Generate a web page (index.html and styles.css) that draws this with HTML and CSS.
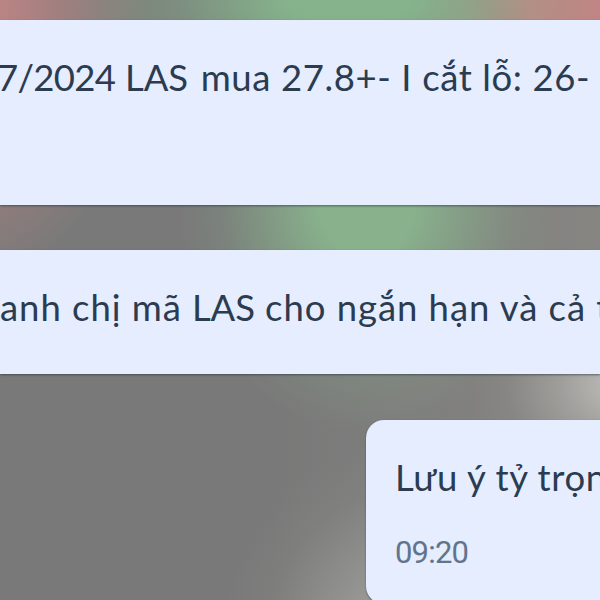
FILE: index.html
```
<!DOCTYPE html>
<html lang="vi">
  <head>
    <meta charset="UTF-8" />
    <title>Chat</title>
    <link rel="stylesheet" href="styles.css">
  </head>
  <body>
    <main class="chat">
      <div class="bubble bubble-first">
        <p class="text line-a"><span class="date">7/2024</span> <span class="code">LAS</span> mua 27.8+- I cắt lỗ: 26-</p>
      </div>
      <div class="bubble bubble-second">
        <p class="text line-b">anh chị mã <span class="code">LAS</span> cho ngắn hạn và cả t</p>
      </div>
      <div class="bubble bubble-last">
        <p class="text line-c">Lưu ý tỷ trọn</p>
        <time class="time">09:20</time>
      </div>
    </main>
  </body>
</html>
```

FILE: styles.css
```
* {
  box-sizing: border-box;
}
body {
  margin: 0;
  overflow: hidden;
}
.chat {
  display: flex;
  flex-direction: column;
  width: 600px;
  height: 600px;
  padding-top: 20px;
  overflow: hidden;
  font-family: Lato, "Noto Sans", sans-serif;
  color: #2b3b50;
  background:
    radial-gradient(ellipse 150px 120px at 620px 385px, #bfbebb 0%, rgba(176, 175, 172, 0.6) 40%, rgba(160, 159, 156, 0.15) 75%, rgba(150, 150, 148, 0) 100%),
    radial-gradient(ellipse 190px 200px at 410px 640px, #aaa9a6 0%, rgba(160, 160, 157, 0.6) 40%, rgba(145, 145, 141, 0.2) 75%, rgba(140, 140, 137, 0) 100%),
    radial-gradient(ellipse 190px 240px at 367px 195px, #88b18c 0%, #88b18c 26%, rgba(136, 177, 140, 0.6) 50%, rgba(136, 177, 140, 0.17) 77%, rgba(136, 177, 140, 0) 100%),
    radial-gradient(ellipse 340px 130px at 350px 0, #85b38b 0%, #85b38b 18%, rgba(133, 179, 139, 0.35) 52%, rgba(133, 179, 139, 0) 85%),
    radial-gradient(ellipse 190px 290px at -40px 0, #c08484 0%, #bd8484 18%, rgba(190, 132, 132, 0) 100%),
    radial-gradient(ellipse 200px 200px at 590px 0, #c87e82 0%, #c87e82 30%, rgba(197, 129, 132, 0) 100%),
    linear-gradient(90deg, #797979 0%, #797979 45%, #868582 100%);
}
.bubble {
  flex: none;
  background: #e5edff;
  box-shadow: 0 1px 2px rgba(40, 50, 55, 0.6);
  overflow: hidden;
}
.bubble-first {
  height: 185px;
  padding-top: 32px;
}
.bubble-second {
  height: 124px;
  margin-top: 45px;
  padding-top: 32px;
}
.bubble-last {
  width: 260px;
  height: 184px;
  margin: 46px 0 0 366px;
  padding: 32px 0 0 29px;
  border-radius: 18px;
}
.text {
  margin: 0;
  font-size: 36.5px;
  line-height: 50px;
  white-space: nowrap;
}
.line-a {
  margin-left: -3px;
  letter-spacing: 0.6px;
}
.line-a .code {
  margin-right: 3px;
}
.date {
  letter-spacing: -0.7px;
}
.line-b {
  letter-spacing: 0.95px;
}
.code {
  letter-spacing: -0.2px;
}
.line-c {
  letter-spacing: 0.6px;
}
.time {
  display: block;
  margin-top: 31px;
  font-family: Roboto, sans-serif;
  font-size: 31px;
  line-height: 40px;
  letter-spacing: -0.8px;
  color: #62748c;
}
```
